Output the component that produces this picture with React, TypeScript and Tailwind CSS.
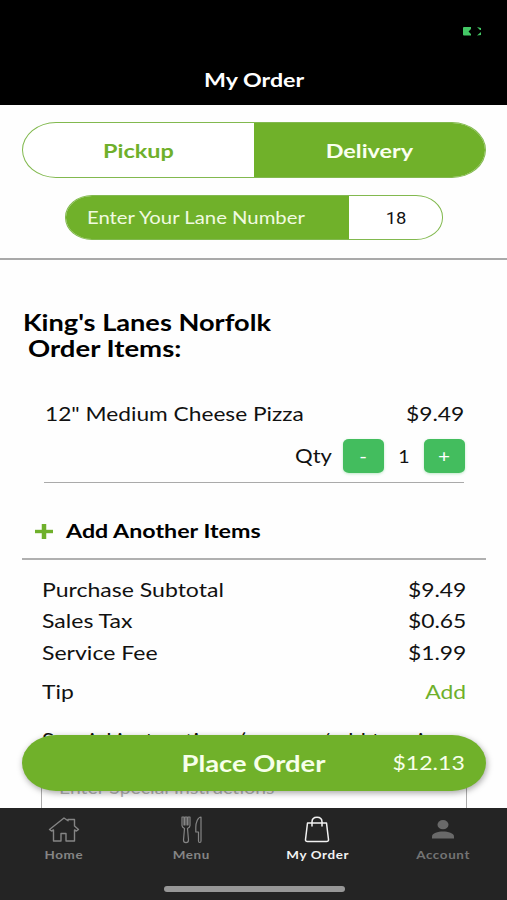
import type { ReactNode } from "react";

type TextProps = { children: ReactNode; className: string };

// Wide-set label: each caller supplies its own horizontal stretch and origin.
function Text({ children, className }: TextProps) {
  return <span className={`inline-block whitespace-nowrap ${className}`}>{children}</span>;
}

const charges = [
  { label: "Purchase Subtotal", amount: "$9.49" },
  { label: "Sales Tax", amount: "$0.65" },
  { label: "Service Fee", amount: "$1.99" },
];

function HomeIcon() {
  return (
    <svg width="32" height="28" viewBox="0 0 32 28" fill="none" stroke="#858585" strokeWidth="1.4" strokeLinejoin="round">
      <path d="M1.500 13.500 16 2l4 2.800V3.500h6.500V10l4 3.500-2 1.500-2-1V25h-8.500v-7.500h-5V25H5.500V14l-2 1z" />
    </svg>
  );
}

function MenuIcon() {
  return (
    <svg width="24" height="28" viewBox="0 0 24 28" fill="none" stroke="#858585" strokeWidth="1.2" strokeLinejoin="round">
      <path d="M2 1v8.500c0 1.500 1 2.200 2.500 3L3.500 24c0 3.500 5 3.500 5 0l-1-11.500c1.500-.8 2.500-1.500 2.500-3V1H8v8H7V1H5v8H4V1zM21 1c-3 0-5.200 5-5.200 10.500V16h2.700v9c0 2 2.500 2 2.500 0V1z" />
    </svg>
  );
}

function BagIcon() {
  return (
    <svg width="26" height="27" viewBox="0 0 26 27" fill="none" stroke="#f2f2f2" strokeWidth="1.5" strokeLinejoin="round">
      <path d="M3.500 7h19l2 16.500c.1 1.200-.6 2-2 2h-19c-1.400 0-2.100-.8-2-2z" />
      <path d="M8 10V6c0-3 2-4.800 5-4.800S18 3 18 6v4" strokeLinecap="round" />
    </svg>
  );
}

function AccountIcon() {
  return (
    <svg width="22" height="19" viewBox="0 0 22 19" fill="#696969">
      <ellipse cx="11" cy="4.700" rx="5.500" ry="4.600" />
      <path d="M0 18.500v-2c0-3.400 6-5 11-5s11 1.600 11 5v2z" />
    </svg>
  );
}

const tabs = [
  { label: "Home", icon: <HomeIcon />, color: "text-[#858585]", shift: "pl-[1px]" },
  { label: "Menu", icon: <MenuIcon />, color: "text-[#858585]", shift: "pl-[3px]" },
  { label: "My Order", icon: <BagIcon />, color: "text-[#f2f2f2]", shift: "pl-[1px]" },
  { label: "Account", icon: <AccountIcon />, color: "text-[#747474]", shift: "pr-[1px]" },
];

export default function App() {
  return (
    <div className="relative flex h-[900px] w-[507px] flex-col overflow-hidden bg-[#fefefe] font-['Lato',sans-serif] text-[#111]">
      <header className="flex h-[105px] shrink-0 flex-col bg-black">
        <div className="flex h-[62px] justify-end pt-[27px] pr-[25px]">
          <svg width="19" height="9" viewBox="0 0 19 9" fill="#43c765">
            <path d="M0 1q0-1 1-1h7v2L5.500 4.500 8 7v1.500H1q-1 0-1-1zM14 0l4 1v2h-1zM18 5v3l-4 .5z" />
          </svg>
        </div>
        <h1 className="flex h-[36px] items-center justify-center pl-[1px] text-white">
          <Text className="scale-x-[1.19] text-[19.500px] font-bold">My Order</Text>
        </h1>
      </header>

      <section className="flex h-[155px] shrink-0 flex-col items-center border-b-[2px] border-[#a9a9a9] pt-[17px]">
        <div className="flex h-[56px] w-[464px] overflow-hidden rounded-[34px/28px] border border-[#82b94f] bg-white">
          <button className="w-[231px] pt-[2px] pl-[1px] text-[#6fb02b]">
            <Text className="scale-x-[1.2] text-[19.500px] font-bold">Pickup</Text>
          </button>
          <button className="flex-1 bg-[#70b12a] pt-[2px] text-[#fafff0]">
            <Text className="scale-x-[1.2] text-[19.500px] font-bold">Delivery</Text>
          </button>
        </div>
        <div className="mt-[17px] flex h-[45px] w-[378px] overflow-hidden rounded-[27px/22px] border border-[#82b94f] bg-white">
          <div className="flex w-[283px] items-center bg-[#70b12a] pt-[2px] pl-[21px] text-[#f0fae0]">
            <Text className="origin-left scale-x-[1.147] text-[17.700px]">Enter Your Lane Number</Text>
          </div>
          <div className="flex flex-1 items-center justify-center pt-[2px] pl-[1px]">
            <Text className="scale-x-[1.15] font-['Roboto',sans-serif] text-[16px]">18</Text>
          </div>
        </div>
      </section>

      <main className="flex flex-1 flex-col">
        <h2 className="mt-[50px] flex flex-col items-start pl-[22.500px] text-[22px] leading-[26px] font-bold text-black">
          <Text className="origin-left scale-x-[1.235]">King&apos;s Lanes Norfolk</Text>
          <Text className="ml-[5px] origin-left scale-x-[1.25]">Order Items:</Text>
        </h2>
        <div className="mt-[36px] ml-[44px] flex h-[85px] w-[420px] flex-col border-b border-[#aaa]">
          <div className="mt-[2px] flex h-[28px] items-center justify-between text-[19.700px]">
            <Text className="ml-[1px] origin-left scale-x-[1.153]">12&quot; Medium Cheese Pizza</Text>
            <Text className="origin-right scale-x-[1.16]">$9.49</Text>
          </div>
          <div className="mt-[11px] flex h-[34px] items-center justify-end">
            <Text className="mr-[11px] origin-right scale-x-[1.12] text-[19.700px]">Qty</Text>
            <button className="h-[34px] w-[41px] rounded-[6px/5px] bg-[#43bd5e] pt-[1px] text-white shadow-[0_1px_3px_#43bd5e55]">
              <Text className="scale-x-[1.22] text-[17px]">-</Text>
            </button>
            <span className="flex w-[40px] justify-center pt-[1px]">
              <Text className="scale-x-[1.15] text-[17px]">1</Text>
            </span>
            <button className="mr-[-0.500px] h-[34px] w-[41px] rounded-[6px/5px] bg-[#43bd5e] pt-[1px] text-white shadow-[0_1px_3px_#43bd5e55]">
              <Text className="scale-x-[1.22] text-[17px]">+</Text>
            </button>
          </div>
        </div>
        <div className="ml-[22px] flex h-[77px] w-[464px] items-center border-b-[2px] border-[#b0b0b0] pt-[20px] pl-[13px]">
          <svg width="18" height="15" viewBox="0 0 18 15" className="mt-[1px]" stroke="#6fb02b">
            <path d="M9 0V15" strokeWidth="4.500" />
            <path d="M0 7.500H18" strokeWidth="3.400" />
          </svg>
          <Text className="ml-[13px] origin-left scale-x-[1.18] text-[19.700px] font-bold text-black">Add Another Items</Text>
        </div>
        <div className="ml-[41px] flex w-[426px] flex-col pt-[13.500px] text-[19.700px]">
          {charges.map(({ label, amount }) => (
            <div key={label} className="flex h-[31.800px] items-center justify-between pr-[0.500px] pl-[0.500px]">
              <Text className="origin-left scale-x-[1.17]">{label}</Text>
              <Text className="origin-right scale-x-[1.16]">{amount}</Text>
            </div>
          ))}
          <div className="mt-[7px] flex h-[32px] items-center justify-between pr-[0.500px] pl-[0.500px]">
            <Text className="origin-left scale-x-[1.16]">Tip</Text>
            <Text className="origin-right scale-x-[1.16] text-[#6fb02b]">Add</Text>
          </div>
          <div className="mt-[15.500px] flex h-[32px] items-center pl-[0.500px]">
            <Text className="origin-left scale-x-[1.15]">Special instructions (remove/add toppings</Text>
          </div>
          <div className="mt-[5px] h-[75px] border border-[#aaa] pt-[14px] pl-[17px] text-[17px] text-[#b5b5b5]">
            <Text className="origin-left scale-x-[1.14]">Enter Special Instructions</Text>
          </div>
        </div>
      </main>

      <button className="absolute top-[735px] left-[22px] grid h-[56px] w-[464px] grid-cols-[103px_1fr_103px] items-center rounded-[34px/28px] bg-[#70b12a] text-[#f7ffe9] shadow-[1px_2px_6px_rgba(0,0,0,0.35)]">
        <span />
        <span className="flex justify-center pr-[1px]">
          <Text className="scale-x-[1.19] text-[23px] font-bold">Place Order</Text>
        </span>
        <span className="flex justify-end pr-[21px]">
          <Text className="origin-right scale-x-[1.17] text-[19.700px]">$12.13</Text>
        </span>
      </button>

      <nav className="absolute top-[808px] left-0 flex h-[92px] w-[507px] flex-col items-center bg-[#242424]">
        <div className="grid h-[78px] w-[507px] grid-cols-4">
          {tabs.map(({ label, icon, color, shift }) => (
            <button key={label} className={`flex flex-col items-center ${shift} ${color}`}>
              <span className="flex h-[38px] items-center pt-[5px]">{icon}</span>
              <Text className="scale-x-[1.22] text-[11px] leading-[17px] font-bold tracking-[0.5px]">{label}</Text>
            </button>
          ))}
        </div>
        <div className="ml-[2px] h-[6px] w-[181px] rounded-full bg-[#979797]" />
      </nav>
    </div>
  );
}
